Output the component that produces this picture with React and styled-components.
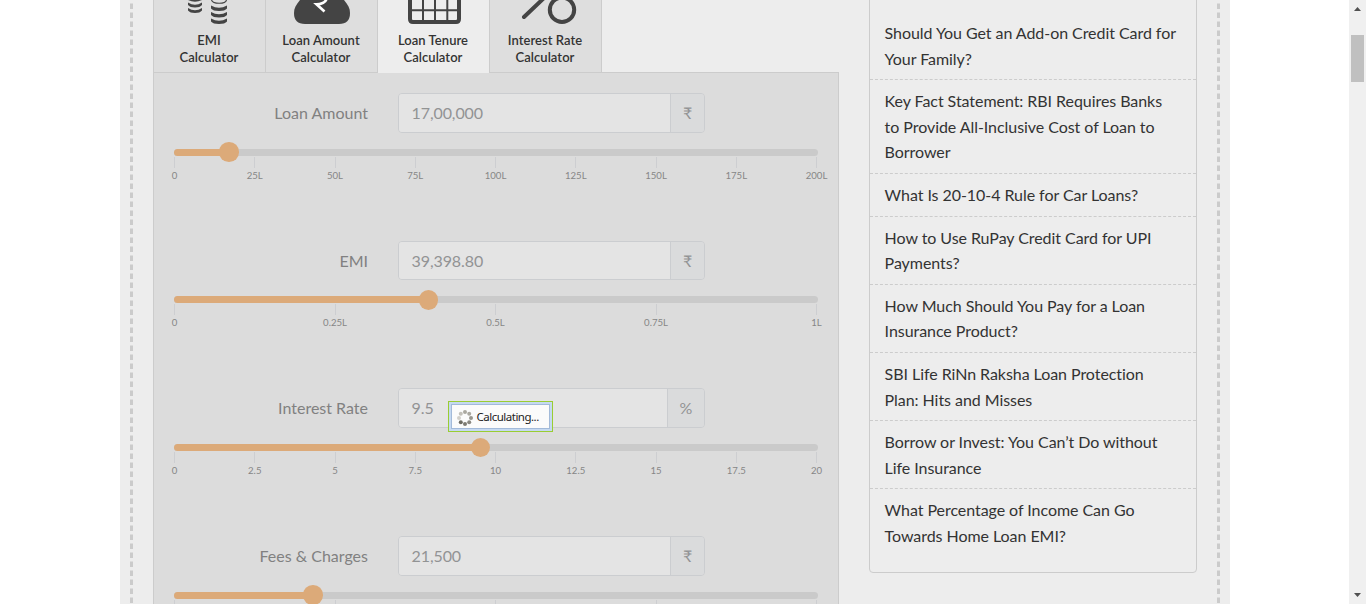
import React from "react";
import styled, { createGlobalStyle } from "styled-components";

const Global = createGlobalStyle`
  *, *::before, *::after { box-sizing: border-box; }
  html, body { margin: 0; padding: 0; background: #fff; }
  body { font: 16px/1.6 Lato, "Noto Sans", sans-serif; color: #333; overflow: hidden; }
`;

const Page = styled.div`
  display: flex;
  width: 1366px;
  height: 604px;
  overflow: hidden;
  background: #fff;
`;

const Viewport = styled.div`
  flex: 1;
  display: flex;
  padding-left: 120px;
`;

const Sheet = styled.div`
  display: flex;
  width: 1110px;
  height: 604px;
  padding: 0 10px;
  background: #ededed;
  overflow: hidden;
`;

const Stitch = styled.div`
  flex: none;
  width: 3px;
  background: repeating-linear-gradient(to bottom, transparent 0 3px, #dcdcdc 3px 4px, #cbcbcb 4px 9px);
`;

const Main = styled.main`
  flex: none;
  width: 686px;
  margin-left: 20px;
`;

const Tabs = styled.nav`
  display: flex;
  height: 73px;
  border-left: 1px solid #ccc;
  border-bottom: 1px solid #ccc;
`;

const Tab = styled.div`
  display: flex;
  flex-direction: column;
  align-items: center;
  flex: none;
  width: 112px;
  height: ${(p) => (p.$active ? 73 : 72)}px;
  padding-right: 1px;
  background: ${(p) => (p.$active ? "#ededed" : "#dedede")};
  border-right: 1px solid #ccc;
  font-size: 13px;
  font-weight: 600;
  line-height: 17px;
  letter-spacing: 0.06px;
  text-align: center;
  color: #333;
  svg { display: block; margin-bottom: 8px; overflow: visible; }
`;

const Panel = styled.section`
  height: 531px;
  padding: 20px;
  border: 1px solid #ccc;
  border-width: 0 1px;
  background: #dcdcdc;
  overflow: hidden;
`;

const Group = styled.div`
  height: 147.7px;
`;

const FieldRow = styled.div`
  display: flex;
  align-items: center;
  height: 39.6px;
`;

const Label = styled.label`
  width: 194px;
  margin-right: 30px;
  text-align: right;
  color: #818181;
`;

const Control = styled.div`
  display: flex;
  width: 307px;
  height: 39.6px;
  border: 1px solid #cbcdd0;
  border-radius: 4px;
  overflow: hidden;
  color: #929394;
  line-height: 38px;
`;

const Value = styled.div`
  flex: 1;
  padding-left: 12.5px;
  letter-spacing: -0.08px;
  background: #e4e4e4;
`;

const Unit = styled.div`
  padding: 0 11.8px;
  border-left: 1px solid #cbcdd0;
  background: #dadbdc;
`;

const Track = styled.div`
  display: flex;
  align-items: center;
  width: 644px;
  height: 7px;
  margin-top: 16.1px;
  border-radius: 4px;
  background: #cacaca;
`;

const Fill = styled.div`
  height: 7px;
  border-radius: 4px 0 0 4px;
  background: #dcaa79;
`;

const Handle = styled.div`
  flex: none;
  width: 19.6px;
  height: 19.6px;
  margin-left: -9.8px;
  border-radius: 50%;
  background: #dcaa79;
`;

const Scale = styled.div`
  display: flex;
  justify-content: space-between;
  width: 643px;
  margin-top: 0.9px;
`;

const Tick = styled.div`
  display: flex;
  flex-direction: column;
  align-items: center;
  width: 1px;
  font-size: 9.6px;
  line-height: 15px;
  white-space: nowrap;
  color: #868686;
  &::before {
    content: "";
    flex: none;
    width: 1px;
    height: 11px;
    background: #cdced1;
  }
`;

const Sidebar = styled.aside`
  flex: none;
  width: 328px;
  height: 613px;
  margin: -40px 20px 0 30px;
  padding-top: 51px;
  border: 1px solid #ccc;
  border-radius: 4px;
`;

const Article = styled.div`
  padding: 8px 0 8px 14.6px;
  border-bottom: ${(p) => (p.$last ? "0" : "1px dashed #ccc")};
  line-height: 25.6px;
  letter-spacing: -0.055px;
  white-space: pre-line;
`;

const ScrollBar = styled.div`
  display: flex;
  flex-direction: column;
  align-items: center;
  justify-content: space-between;
  width: 17px;
  height: 604px;
  background: #f0f0f0;
  svg { display: block; }
`;

const Thumb = styled.div`
  width: 13px;
  height: 47px;
  margin: 18px 0 auto;
  background: #c0c0c0;
`;

const LoadMask = styled.div`
  position: absolute;
  left: 448px;
  top: 401px;
  width: 105px;
  height: 31px;
  padding: 2px;
  border: 1px solid #9acd32;
  background: #c5d9f1;
`;

const LoadBox = styled.div`
  display: flex;
  align-items: flex-start;
  height: 25px;
  padding: 5px 0 0 5px;
  border: 1px solid #a3bad9;
  background: #fbfbfb;
  font: 11.5px/16px "Noto Sans", Tahoma, sans-serif;
  letter-spacing: -0.5px;
  color: #222;
  white-space: nowrap;
  svg { flex: none; margin-right: 3.5px; }
`;

const LoadText = styled.span`
  margin-top: -1px;
`;

const CoinsIcon = () => (
  <svg width="58" height="24" viewBox="0 0 58 24" fill="#444">
    <path d="M8 0H22Q15 3.500 8 0Z" />
    {[2.500, 8].map((y) => (
      <path key={y} d="M0 0Q7 4.500 14 0V2.500Q12 5 7 5Q2 5 0 2.500Z" transform={`translate(8 ${y})`} />
    ))}
    <path d="M31.500 0C33 4.300 45.500 4.300 46.500 0" fill="none" stroke="#444" strokeWidth="1.200" />
    {[5.500, 12, 18.500].map((y) => (
      <path key={y} d="M0 0Q8 4.500 16 0V3Q14 5.500 8 5.500Q2 5.500 0 3Z" transform={`translate(31 ${y})`} />
    ))}
  </svg>
);

const BagIcon = () => (
  <svg width="58" height="24" viewBox="0 0 58 24">
    <path d="M8 0C4 5 2 8 2 13Q2 24 13 24H47Q58 24 58 13C58 8 56 5 52 0Z" fill="#444" />
    <path d="M34.500 -1Q33 4 24.500 4.300L32.500 11.500" fill="none" stroke="#fff" strokeWidth="2.700" />
  </svg>
);

const CalendarIcon = () => (
  <svg width="58" height="24" viewBox="0 0 58 24" fill="none" stroke="#444">
    <path d="M6 -4V19Q6 22 9 22H52Q55 22 55 19V-4" strokeWidth="4" />
    <path d="M19 0V22M31 0V22M43.300 0V22M6 10.200H55" strokeWidth="2" />
  </svg>
);

const PercentIcon = () => (
  <svg width="58" height="24" viewBox="0 0 58 24" fill="none" stroke="#444" strokeWidth="4">
    <path d="M8 17L28 -2" strokeLinecap="round" />
    <circle cx="46" cy="9.800" r="12.200" />
  </svg>
);

const Spinner = () => (
  <svg width="16" height="16" viewBox="0 0 16 16">
    {[
      [8, 2, "#aaa8a0"], [12.200, 3.800, "#aaa8a0"], [14, 8, "#98968e"], [12.200, 12.200, "#898780"],
      [8, 14, "#7c7a72"], [3.800, 12.200, "#6d6b62"], [2, 8, "#d1cfc9"], [3.800, 3.800, "#c2c0b9"],
    ].map(([x, y, c]) => <circle key={`${x}-${y}`} cx={x} cy={y} r="2" fill={c} />)}
  </svg>
);

const ArrowUp = () => (
  <svg width="7" height="17" viewBox="0 0 7 17"><path d="M0 11L3.500 7L7 11Z" fill="#505050" /></svg>
);
const ArrowDown = () => (
  <svg width="7" height="17" viewBox="0 0 7 17"><path d="M0 6L3.500 10L7 6Z" fill="#505050" /></svg>
);

const tabs = [
  ["EMI", CoinsIcon],
  ["Loan Amount", BagIcon],
  ["Loan Tenure", CalendarIcon, true],
  ["Interest Rate", PercentIcon],
];

const fields = [
  { label: "Loan Amount", value: "17,00,000", unit: "₹", at: 55, ticks: ["0", "25L", "50L", "75L", "100L", "125L", "150L", "175L", "200L"] },
  { label: "EMI", value: "39,398.80", unit: "₹", at: 254.500, ticks: ["0", "0.25L", "0.5L", "0.75L", "1L"] },
  { label: "Interest Rate", value: "9.5", unit: "%", at: 306.500, ticks: ["0", "2.5", "5", "7.5", "10", "12.5", "15", "17.5", "20"] },
  { label: "Fees & Charges", value: "21,500", unit: "₹", at: 139, ticks: ["", "", "", "", ""] },
];

const articles = [
  "Should You Get an Add-on Credit Card for\nYour Family?",
  "Key Fact Statement: RBI Requires Banks\nto Provide All-Inclusive Cost of Loan to\nBorrower",
  "What Is 20-10-4 Rule for Car Loans?",
  "How to Use RuPay Credit Card for UPI\nPayments?",
  "How Much Should You Pay for a Loan\nInsurance Product?",
  "SBI Life RiNn Raksha Loan Protection\nPlan: Hits and Misses",
  "Borrow or Invest: You Can’t Do without\nLife Insurance",
  "What Percentage of Income Can Go\nTowards Home Loan EMI?",
];

export default function App() {
  return (
    <>
      <Global />
      <Page>
        <Viewport>
          <Sheet>
            <Stitch />
            <Main>
              <Tabs>
                {tabs.map(([name, Icon, active]) => (
                  <Tab key={name} $active={active}>
                    <Icon />
                    <span>{name}<br />Calculator</span>
                  </Tab>
                ))}
              </Tabs>
              <Panel>
                {fields.map((f) => (
                  <Group key={f.label}>
                    <FieldRow>
                      <Label>{f.label}</Label>
                      <Control>
                        <Value>{f.value}</Value>
                        <Unit>{f.unit}</Unit>
                      </Control>
                    </FieldRow>
                    <Track>
                      <Fill style={{ width: f.at }} />
                      <Handle />
                    </Track>
                    <Scale>
                      {f.ticks.map((t, i) => <Tick key={i}>{t}</Tick>)}
                    </Scale>
                  </Group>
                ))}
              </Panel>
            </Main>
            <Sidebar>
              {articles.map((a, i) => (
                <Article key={a} $last={i === articles.length - 1}>{a}</Article>
              ))}
            </Sidebar>
            <Stitch />
          </Sheet>
        </Viewport>
        <ScrollBar>
          <ArrowUp />
          <Thumb />
          <ArrowDown />
        </ScrollBar>
      </Page>
      <LoadMask>
        <LoadBox><Spinner /><LoadText>Calculating...</LoadText></LoadBox>
      </LoadMask>
    </>
  );
}
